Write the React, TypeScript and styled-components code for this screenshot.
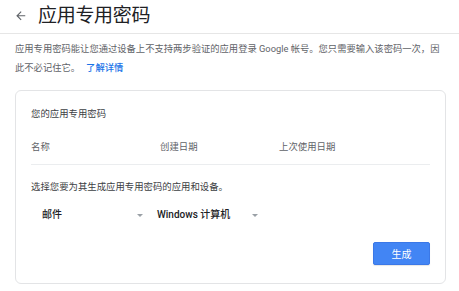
import React from 'react';
import styled, { createGlobalStyle } from 'styled-components';

const GlobalStyle = createGlobalStyle`
    html, body {
        margin: 0;
        padding: 0;
        background: #ffffff;
    }
    body {
        font-family: Roboto, "Noto Sans CJK SC", "Liberation Sans", sans-serif;
        -webkit-font-smoothing: antialiased;
    }
`;

const columns = ['名称', '创建日期', '上次使用日期'];
const selects = ['邮件', 'Windows 计算机'];

const App = () => {
    return (
        <Page>
            <GlobalStyle />
            <Header>
                <BackButton aria-label='返回'>
                    <svg width='13.5' height='13.5' viewBox='0 0 24 24'>
                        <path fill='#5f6368' d='M20 11H7.83l5.59-5.59L12 4l-8 8 8 8 1.41-1.41L7.83 13H20v-2z' />
                    </svg>
                </BackButton>
                <Title>应用专用密码</Title>
            </Header>
            <Intro>
                应用专用密码能让您通过设备上不支持两步验证的应用登录 Google 帐号。您只需要输入该密码一次，因此不必记住它。
                <LearnMore href='#'>了解详情</LearnMore>
            </Intro>
            <Card>
                <CardTitle>您的应用专用密码</CardTitle>
                <ColumnRow>
                    {columns.map((c) => (
                        <ColumnHead key={c}>{c}</ColumnHead>
                    ))}
                </ColumnRow>
                <Instruction>选择您要为其生成应用专用密码的应用和设备。</Instruction>
                <SelectRow>
                    {selects.map((s) => (
                        <Select key={s}>
                            <SelectValue>{s}</SelectValue>
                            <Caret />
                        </Select>
                    ))}
                </SelectRow>
                <Actions>
                    <PrimaryButton>生成</PrimaryButton>
                </Actions>
            </Card>
        </Page>
    );
};

export default App;

const Page = styled.div`
    width: 459px;
    min-height: 291px;
    background: #ffffff;
    color: #202124;
`;

const Header = styled.div`
    display: flex;
    align-items: center;
    height: 32px;
    padding: 0 0 1px 14px;
    border-bottom: 1px solid #e6e6e6;
`;

const BackButton = styled.div`
    display: flex;
    width: 14px;
    height: 14px;
    margin-top: -1px;
`;

const Title = styled.h1`
    margin: 0 0 0 10px;
    font-size: 19px;
    line-height: 24px;
    font-weight: 400;
    color: #202124;
    letter-spacing: -0.3px;
`;

const Intro = styled.p`
    margin: 5px 0 0;
    padding: 0 18px 0 15px;
    font-size: 9.3px;
    line-height: 19px;
    color: #5f6368;
`;

const LearnMore = styled.a`
    margin-left: 6px;
    color: #1a73e8;
    font-weight: 500;
    text-decoration: none;
`;

const Card = styled.div`
    margin: 13px 0 0 15px;
    width: 431px;
    box-sizing: border-box;
    padding: 0 15px 18px;
    border: 1px solid #e3e4e6;
    border-radius: 6px;
`;

const CardTitle = styled.div`
    padding-top: 14px;
    font-size: 9.4px;
    line-height: 18px;
    color: #3c4043;
`;

const ColumnRow = styled.div`
    display: grid;
    grid-template-columns: 129px 119px 1fr;
    padding: 15px 0 8px;
    border-bottom: 1px solid #ebedef;
`;

const ColumnHead = styled.div`
    font-size: 9.4px;
    line-height: 18px;
    color: #5f6368;
`;

const Instruction = styled.div`
    margin-top: 13px;
    font-size: 9.4px;
    line-height: 18px;
    color: #3c4043;
`;

const SelectRow = styled.div`
    display: flex;
    margin-top: 10px;
`;

const Select = styled.div`
    display: flex;
    align-items: center;
    justify-content: space-between;
    width: 115px;
    height: 18px;
    box-sizing: border-box;
    padding: 0 3px 0 11px;
`;

const SelectValue = styled.span`
    font-size: 10px;
    line-height: 18px;
    font-weight: 500;
    color: #202124;
`;

const Caret = styled.span`
    width: 0;
    height: 0;
    border-left: 3px solid transparent;
    border-right: 3px solid transparent;
    border-top: 3px solid #9aa0a6;
`;

const Actions = styled.div`
    display: flex;
    justify-content: flex-end;
    margin-top: 18px;
`;

const PrimaryButton = styled.button`
    width: 57px;
    height: 23px;
    padding: 0;
    border: 1px solid #3b78e7;
    border-radius: 2px;
    background: #4285f4;
    box-shadow: 0 1px 1px rgba(0, 0, 0, 0.1);
    color: #ffffff;
    font-family: Roboto, "Noto Sans CJK SC", sans-serif;
    font-size: 10px;
    cursor: pointer;
`;
